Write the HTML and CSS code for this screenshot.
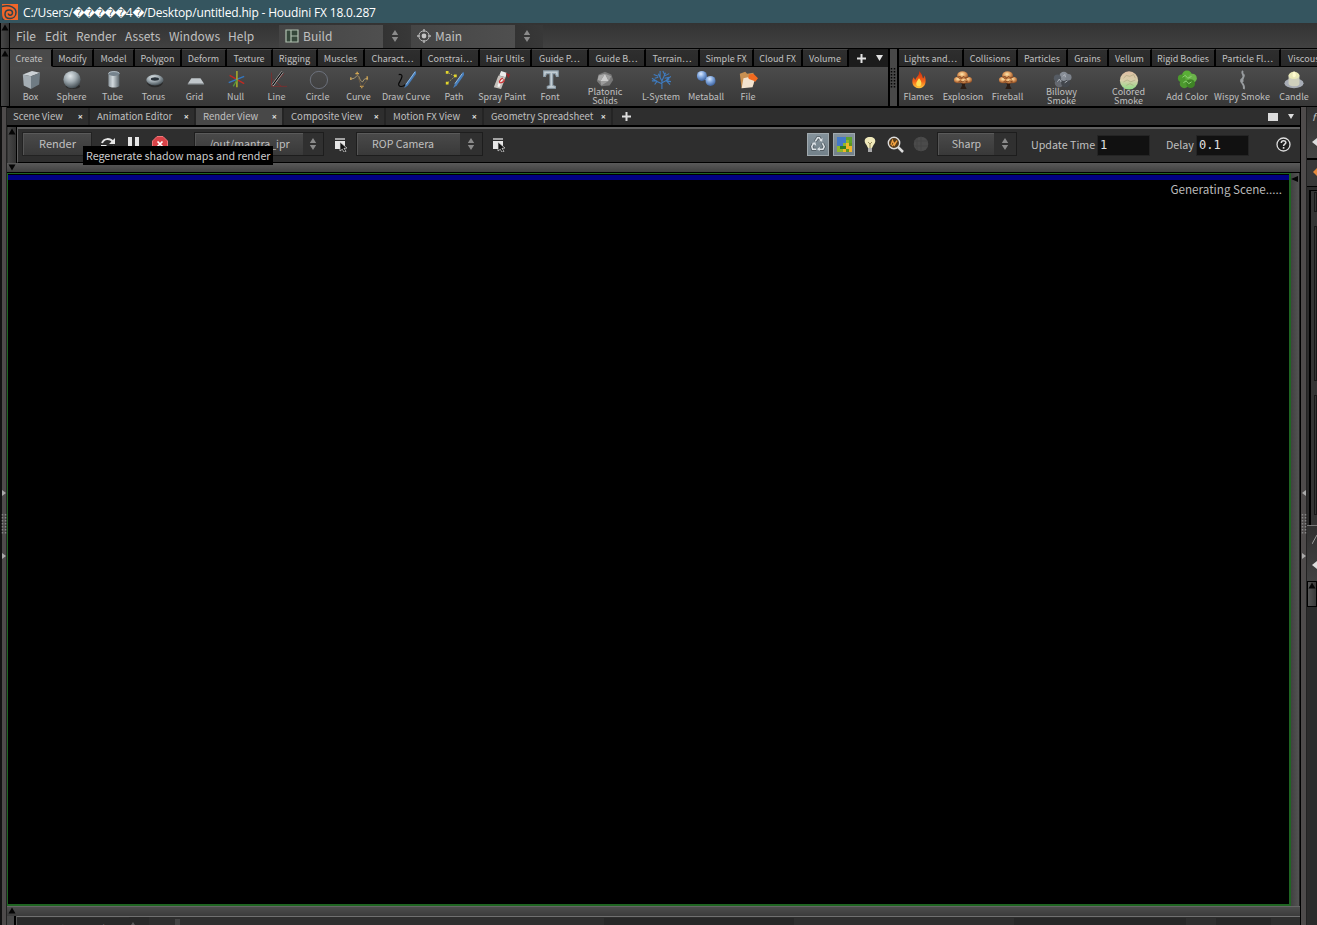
FILE: index.html
```html
<!DOCTYPE html>
<html lang="en">
<head>
<meta charset="utf-8">
<title>Houdini FX</title>
<link rel="stylesheet" href="styles.css">
</head>
<body>
<svg class="defs" width="0" height="0">
  <defs>
    <linearGradient id="steel" x1="0" x2="1"><stop offset="0" stop-color="#8e989f"/><stop offset=".4" stop-color="#d3dade"/><stop offset="1" stop-color="#5b656b"/></linearGradient>
    <radialGradient id="ball" cx=".4" cy=".3" r=".7"><stop offset="0" stop-color="#e0e7ea"/><stop offset=".5" stop-color="#9da8ae"/><stop offset="1" stop-color="#465056"/></radialGradient>
    <radialGradient id="blueball" cx=".4" cy=".3" r=".7"><stop offset="0" stop-color="#dcebff"/><stop offset=".5" stop-color="#7fa5dc"/><stop offset="1" stop-color="#3f649f"/></radialGradient>
    <linearGradient id="fire" x1="0" x2="0" y1="0" y2="1"><stop offset="0" stop-color="#c92a0c"/><stop offset=".6" stop-color="#f4661a"/><stop offset="1" stop-color="#ffc93a"/></linearGradient>
    <radialGradient id="boom" cx=".45" cy=".35" r=".65"><stop offset="0" stop-color="#ffe9b0"/><stop offset=".5" stop-color="#dd9a5c"/><stop offset="1" stop-color="#8b4b23"/></radialGradient>
    <linearGradient id="tint" x1="0" x2="0" y1="0" y2="1"><stop offset="0" stop-color="#dfc0a4"/><stop offset=".5" stop-color="#d7cfab"/><stop offset="1" stop-color="#8edb86"/></linearGradient>
    <symbol id="explosion" viewBox="0 0 22 22">
      <path d="M9 13h5l-1 4 2 4H8l2-4z" fill="#2b1d15"/>
      <ellipse cx="6" cy="11" rx="5" ry="3.500" fill="url(#boom)"/><ellipse cx="16" cy="11" rx="5" ry="3.500" fill="url(#boom)"/><ellipse cx="10.500" cy="6" rx="6" ry="4.500" fill="url(#boom)"/><ellipse cx="12" cy="12" rx="4" ry="3" fill="url(#boom)"/>
      <path d="M5 8l3-1 1 2 3-2 2 2 3-1M6 13l2-1 2 1 3-1 3 1" fill="none" stroke="#713615" stroke-width=".8"/>
    </symbol>
    <symbol id="spin" viewBox="0 0 8 14"><path d="M4 1l3.200 5H.8zM4 13l3.200-5H.8z" fill="#8b8b8b"/></symbol>
    <symbol id="pick" viewBox="0 0 14 15"><path d="M1 1h10v2H1z" fill="#a3a3a3"/><path d="M1 4h10v8H1z" fill="#e7e7e7"/><path d="M6 5l7 6-3 .4 2 3-2 .8-1.700-3L6 14z" fill="#151515" stroke="#ddd" stroke-width=".7"/></symbol>
    <symbol id="up" viewBox="0 0 8 7"><path d="M4 .5L7.500 6.500H.5z" fill="#050505"/></symbol>
    <symbol id="grip" viewBox="0 0 6 20"><path d="M1.500 0v20M4.500 0v20" stroke="currentColor" stroke-width="1.500" stroke-dasharray="1.500 1.500"/></symbol>
  </defs>
</svg>
<div class="window">
  <header class="titlebar">
    <svg class="logo" viewBox="0 0 16 16"><path d="M0 0h16v16H0z" fill="#f0662a"/><path d="M0 2.500C8 .500 14 3.500 14 8.500c0 4-3 6-6 6-3.500 0-5-2-5-4.300C3 7.500 5 6 7.300 6c2 0 3.200 1.300 3.200 2.800 0 1.600-1.200 2.500-2.500 2.400-1.200-.1-1.700-1-1.500-1.900" fill="none" stroke="#2f434c" stroke-width="1.500"/><path d="M0 9c0 4 1 6 3 7H0z" fill="#2f434c"/></svg>
    <span class="title">C:/Users/<span class="bad">�����</span>4<span class="bad">�</span>/Desktop/untitled.hip - Houdini FX 18.0.287</span>
  </header>

  <div class="row menurow">
    <div class="handle"><svg class="tri"><use href="#up"/></svg></div>
    <nav class="menu"><span class="m1">File</span><span class="m2">Edit</span><span class="m3">Render</span><span class="m4">Assets</span><span class="m5">Windows</span><span>Help</span></nav>
    <div class="desk"><svg width="14" height="14" viewBox="0 0 14 14"><path d="M1 1h12v12H1zM6 1v12M6 7h7" fill="#35473a" stroke="#b0c0b0" stroke-width="1.200"/></svg>Build</div>
    <div class="deskspin"><svg width="8" height="14"><use href="#spin"/></svg></div>
    <div class="desk"><svg width="14" height="14" viewBox="0 0 14 14"><circle cx="7" cy="7" r="5.200" fill="none" stroke="#b5b5b5"/><circle cx="7" cy="7" r="2.400" fill="#c5c5c5"/><path d="M7 0v3M7 11v3M0 7h3M11 7h3" stroke="#b5b5b5" stroke-width="1.400"/></svg>Main</div>
    <div class="deskspin"><svg width="8" height="14"><use href="#spin"/></svg></div>
  </div>

  <div class="row shelves">
    <div class="handle"><svg class="tri"><use href="#up"/></svg></div>
    <section class="shelf left">
      <div class="stabs">
        <span class="on" style="width:43px">Create</span><span style="width:41px">Modify</span><span style="width:41px">Model</span><span style="width:47px">Polygon</span><span style="width:45px">Deform</span><span style="width:46px">Texture</span><span style="width:45px">Rigging</span><span style="width:47px">Muscles</span><span style="width:57px">Charact…</span><span style="width:58px">Constrai…</span><span style="width:52px">Hair Utils</span><span style="width:57px">Guide P…</span><span style="width:57px">Guide B…</span><span style="width:54px">Terrain…</span><span style="width:54px">Simple FX</span><span style="width:49px">Cloud FX</span><span style="width:46px">Volume</span>
        <svg class="plus" width="9" height="9" viewBox="0 0 9 9"><path d="M4.500 0v9M0 4.500h9" stroke="#e2e2e2" stroke-width="2"/></svg>
        <svg class="down" width="7" height="6" viewBox="0 0 7 6"><path d="M0 0h7L3.500 6z" fill="#e2e2e2"/></svg>
      </div>
      <div class="tools">
        <div class="tool" style="width:41px"><svg viewBox="0 0 22 22"><path d="M2 5l10-4 9 2-10 4z" fill="#cbd1d5"/><path d="M2 5l9 2v14l-8-4z" fill="#a4adb3"/><path d="M11 7l10-4-1 13-9 5z" fill="#6f7b83"/></svg><b>Box</b></div>
        <div class="tool" style="width:41px"><svg viewBox="0 0 22 22"><ellipse cx="12" cy="18" rx="8" ry="3" fill="#292929"/><circle cx="11" cy="10.500" r="9.500" fill="url(#ball)"/></svg><b>Sphere</b></div>
        <div class="tool" style="width:41px"><svg viewBox="0 0 22 22"><path d="M6 4v13c0 3 12 3 12 0V4z" fill="url(#steel)"/><ellipse cx="12" cy="4" rx="6" ry="2.500" fill="#76838d"/><path d="M6 4c0-3 12-3 12 0" fill="none" stroke="#b7c2ca"/></svg><b>Tube</b></div>
        <div class="tool" style="width:41px"><svg viewBox="0 0 22 22"><ellipse cx="12" cy="13" rx="9" ry="6" fill="#292929"/><ellipse cx="12" cy="11" rx="9.500" ry="6" fill="url(#ball)"/><ellipse cx="12" cy="10" rx="4.500" ry="1.900" fill="#2a333b"/></svg><b>Torus</b></div>
        <div class="tool" style="width:41px"><svg viewBox="0 0 22 22"><path d="M7 9h10l4 6H3z" fill="#c1c7cb"/><path d="M3 15h18v1H3z" fill="#878f94"/></svg><b>Grid</b></div>
        <div class="tool" style="width:41px"><svg viewBox="0 0 22 22"><path d="M4 6l16 9" stroke="#c02a22" stroke-width="1.500"/><path d="M3 14l17-7" stroke="#3477c0" stroke-width="1.500"/><path d="M12 1v18" stroke="#a9ad2c" stroke-width="1.700"/><path d="M8 18l4-7" stroke="#53973b" stroke-width="1.500"/></svg><b>Null</b></div>
        <div class="tool" style="width:41px"><svg viewBox="0 0 22 22"><path d="M5 3v15h17M6 16L19 4M6 10l10 8" stroke="#793030" fill="none"/><path d="M6 17L17 2" stroke="#ddd" stroke-width="2.500"/><path d="M6 17L17 2" stroke="#090909" stroke-width="1.500"/></svg><b>Line</b></div>
        <div class="tool" style="width:41px"><svg viewBox="0 0 22 22"><circle cx="12" cy="11" r="9.500" fill="none" stroke="#707581"/></svg><b>Circle</b></div>
        <div class="tool" style="width:41px"><svg viewBox="0 0 22 22"><path d="M2 10l4-1 3-3c3 0 2 6 6 7l2-3 4-1" fill="none" stroke="#b4a276"/><path d="M9 2v3M7 4h4M14 18v2M12 18h4M2 8v3M20 7v4" stroke="#d1a553" stroke-width="1.500"/><path d="M9 5l5 14 7-9" fill="none" stroke="#846742" stroke-width=".6"/></svg><b>Curve</b></div>
        <div class="tool" style="width:54px"><svg viewBox="0 0 22 22"><path d="M3 5c7-1 2 6 0 10-1 4 5 4 7 1" fill="none" stroke="#070707" stroke-width="1.300"/><path d="M21 1L11 15l-2 5 4-3L23 3z" fill="#477db9"/><path d="M21 2L11 16" stroke="#9dc1e4"/></svg><b>Draw Curve</b></div>
        <div class="tool" style="width:42px"><svg viewBox="0 0 22 22"><path d="M3 2l9 5-9 8" fill="none" stroke="#ada85f" stroke-dasharray="1.500 1.200"/><path d="M2 1h3v3H2zM11 5h3v3h-3zM2 13h3v3H2z" fill="#e2d52b"/><path d="M21 2L12 15l-2 5 4-3L23 4z" fill="#477db9"/><path d="M20 4l-8 11" stroke="#9dc1e4"/></svg><b>Path</b></div>
        <div class="tool" style="width:54px"><svg viewBox="0 0 22 22"><path d="M7 6l8 2-5 13-8-2z" fill="#c7c2bd"/><path d="M8 6l2-5 6 2-1 5z" fill="#ececec"/><path d="M9 9l3 1-4 9-2-1z" fill="#f4f4f4"/><path d="M12 9c-4 1-5 6-2 5s4-2 3-4" fill="none" stroke="#ce3636" stroke-width="1.500"/><path d="M15 3l5 2-2 4z" fill="#a92226" opacity=".8"/></svg><b>Spray Paint</b></div>
        <div class="tool" style="width:42px"><svg viewBox="0 0 22 22"><path d="M4 1h16v6h-2l-1-3h-3v13l3 1v2H8v-2l3-1V4H7L6 7H4z" fill="#c3cdd3" stroke="#8fa0ac" stroke-width="1.200"/></svg><b>Font</b></div>
        <div class="tool two" style="width:68px"><svg viewBox="0 0 22 22"><path d="M11 2l7 3 2 6-4 6-9 1-5-6 2-7z" fill="#777"/><path d="M11 4L6 12h9z" fill="#ccc"/><path d="M11 4l7 3-3 5zM6 12l1 5 8-5z" fill="#9b9b9b"/><path d="M4 6l7-2-5 8-3-1z" fill="#a8a8a8"/></svg><b>Platonic<br>Solids</b></div>
        <div class="tool" style="width:44px"><svg viewBox="0 0 22 22"><path d="M12 21v-9M12 15L3 11M12 14l8-4M12 12L8 4M12 12l4-9M6 12L1 9M7 12l-3 4M8 7L3 5M10 8V1M14 7l6-3M15 5l-2-4M17 12l6 1M17 11l5-4M17 12l4 4M5 12H1M8 8L4 9M15 9l5-1" fill="none" stroke="#3f7cc0" stroke-width="1.200"/></svg><b>L-System</b></div>
        <div class="tool" style="width:46px"><svg viewBox="0 0 22 22"><path d="M6 6l10 6" stroke="#7aa1d6" stroke-width="4"/><circle cx="6.500" cy="6.500" r="5.500" fill="url(#blueball)"/><circle cx="16" cy="12" r="5.500" fill="url(#blueball)"/></svg><b>Metaball</b></div>
        <div class="tool" style="width:38px"><svg viewBox="0 0 22 22"><path d="M2 4l6-2 2 2 7-1v13L4 20z" fill="#c79052"/><path d="M12 5l5-1 5 5-3 4-5-2-3 2z" fill="#f16a20"/><path d="M4 20L6 9l5-1 1 2 6 2-2 7z" fill="#f3e3cf"/></svg><b>File</b></div>
      </div>
    </section>
    <div class="divider"><svg width="6" height="20"><use href="#grip"/></svg></div>
    <section class="shelf right">
      <div class="stabs">
        <span style="width:65px">Lights and…</span><span style="width:54px">Collisions</span><span style="width:50px">Particles</span><span style="width:41px">Grains</span><span style="width:43px">Vellum</span><span style="width:64px">Rigid Bodies</span><span style="width:65px">Particle Fl…</span><span class="cut">Viscous</span>
      </div>
      <div class="tools">
        <div class="tool" style="width:39px"><svg viewBox="0 0 22 22"><path d="M11 1c5 5 3 7 5 8l1-3c3 6 1 14-6 14S2 13 5 8l2 3c1-4 5-5 4-10z" fill="url(#fire)"/><path d="M11 9c4 4 3 9 0 9s-4-3-2-6z" fill="#ffdf54"/></svg><b>Flames</b></div>
        <div class="tool" style="width:50px"><svg><use href="#explosion"/></svg><b>Explosion</b></div>
        <div class="tool" style="width:39px"><svg><use href="#explosion"/></svg><b>Fireball</b></div>
        <div class="tool two" style="width:69px"><svg viewBox="0 0 22 22"><circle cx="8" cy="14" r="5" fill="#656970"/><circle cx="15" cy="14" r="5" fill="#42464c"/><circle cx="13" cy="7" r="5" fill="#878d96"/><circle cx="6" cy="9" r="4" fill="#555b63"/><circle cx="18" cy="8" r="3.500" fill="#7c828b"/><path d="M6 13l2-3 2 3M12 7l2-2 1 3M14 14l3-2" stroke="#b5bbc2" fill="none"/></svg><b>Billowy<br>Smoke</b></div>
        <div class="tool two" style="width:65px"><svg viewBox="0 0 22 22"><circle cx="11" cy="11.500" r="10" fill="url(#tint)"/><path d="M5 9l3-3 4 1 4-2 2 4M5 13l4-2 4 2 5-2M8 17l4-2 4 2" stroke="#a09f78" stroke-width=".6" fill="none"/></svg><b>Colored<br>Smoke</b></div>
        <div class="tool" style="width:52px"><svg viewBox="0 0 22 22"><circle cx="11" cy="6" r="5.500" fill="#5aae37"/><circle cx="5" cy="9" r="4" fill="#4b992d"/><circle cx="17" cy="9" r="4.800" fill="#6ab34a"/><circle cx="8" cy="15" r="5" fill="#4d992f"/><circle cx="15" cy="15" r="4.800" fill="#3f8426"/><path d="M6 8l3-2 3 3 4-2M7 14l3-2 3 3 3-2" stroke="#94d779" fill="none"/></svg><b>Add Color</b></div>
        <div class="tool" style="width:58px"><svg viewBox="0 0 22 22"><path d="M12 1c-3 3 4 5-1 9-4 3 4 5 2 11M13 5c1 3-3 4-1 8" fill="none" stroke="#999da0" stroke-width="2"/></svg><b>Wispy Smoke</b></div>
        <div class="tool" style="width:46px"><svg viewBox="0 0 22 22"><ellipse cx="11" cy="14.500" rx="10.500" ry="5.500" fill="#a8adb6"/><path d="M5 6v9c1 4 12 4 12 0V6z" fill="#cfd0bd"/><ellipse cx="11" cy="6" rx="6" ry="4" fill="#eae9b8"/><path d="M11 1c4 5 1 7 0 7s-3-2 0-7z" fill="#fffbd0"/></svg><b>Candle</b></div>
      </div>
    </section>
  </div>

  <div class="workspace">
    <div class="edge"><svg class="e1" width="4" height="6" viewBox="0 0 4 6"><path d="M0 0l4 3-4 3z" fill="#aaa"/></svg><svg class="e2" width="6" height="20"><use href="#grip"/></svg><svg class="e3" width="4" height="6" viewBox="0 0 4 6"><path d="M0 0l4 3-4 3z" fill="#aaa"/></svg></div>
    <main class="pane">
      <div class="ptabs">
        <div class="ptab" style="width:83px"><span>Scene View</span><i>×</i></div><div class="ptab" style="width:106px"><span>Animation Editor</span><i>×</i></div><div class="ptab on" style="width:88px"><span>Render View</span><i>×</i></div><div class="ptab" style="width:102px"><span>Composite View</span><i>×</i></div><div class="ptab" style="width:98px"><span>Motion FX View</span><i>×</i></div><div class="ptab" style="width:129px"><span>Geometry Spreadsheet</span><i>×</i></div>
        <svg class="padd" width="9" height="9" viewBox="0 0 9 9"><path d="M4.500 0v9M0 4.500h9" stroke="#ddd" stroke-width="2"/></svg>
        <svg class="pmax" width="10" height="8" viewBox="0 0 10 8"><path d="M0 0h10v8H0z" fill="#dcdcdc"/></svg>
        <svg class="pdown" width="6" height="5" viewBox="0 0 6 5"><path d="M0 0h6L3 5z" fill="#ddd"/></svg>
      </div>
      <div class="toolrow">
        <div class="handle small"><svg class="tri"><use href="#up"/></svg></div>
        <div class="toolbar">
          <div class="btn render">Render</div>
          <svg class="ic reload" width="16" height="15" viewBox="0 0 16 15"><path d="M2 6c2-5 8-5 11-1" fill="none" stroke="#e6e6e6" stroke-width="2"/><path d="M15 1v6H9z" fill="#e6e6e6"/><path d="M14 9c-2 5-8 5-11 1" fill="none" stroke="#e6e6e6" stroke-width="2"/><path d="M1 14V8h6z" fill="#e6e6e6"/></svg>
          <svg class="ic pause" width="11" height="14" viewBox="0 0 11 14"><path d="M0 0h4v14H0zM7 0h4v14H7z" fill="#e6e6e6"/></svg>
          <svg class="ic stop" width="16" height="16" viewBox="0 0 16 16"><path d="M5 .500h6L15.500 5v6L11 15.500H5L.5 11V5z" fill="#d94348" stroke="#ef7779"/><path d="M5.500 5.500l5 5M10.500 5.500l-5 5" stroke="#fff" stroke-width="1.700"/></svg>
          <div class="combo c1"><div class="btn">/out/mantra_ipr</div><div class="spin"><svg width="8" height="14"><use href="#spin"/></svg></div></div>
          <svg class="ic pick1" width="14" height="15"><use href="#pick"/></svg>
          <div class="combo c2"><div class="btn">ROP Camera</div><div class="spin"><svg width="8" height="14"><use href="#spin"/></svg></div></div>
          <svg class="ic pick2" width="14" height="15"><use href="#pick"/></svg>
          <div class="toggle t1"><svg width="16" height="16" viewBox="0 0 18 18"><path d="M6 6l2.500-4h2L13 6M14 8l2 4-1.500 3H10M7 15H3l-1-3 2-4" fill="none" stroke="#555f66" stroke-width="3.600"/><path d="M6 6l2.500-4h2L13 6M14 8l2 4-1.500 3H10M7 15H3l-1-3 2-4" fill="none" stroke="#dce2e6" stroke-width="1.700"/><path d="M10 6h4V2zM11 12v5l-3-2zM2 8l4-1 1 4z" fill="#dce2e6"/></svg></div>
          <div class="toggle t2"><svg width="15" height="15" viewBox="0 0 15 15"><path d="M0 0h15v15H0z" fill="#4479c8"/><path d="M9 0h6v6H9z" fill="#60a32c"/><path d="M9 3h3v3H9zM6 6h3v3H6zM0 9h6v6H0z" fill="#8eb62c"/><path d="M3 9h3v3H3zM9 6h6v3H9zM6 9h3v6H6z" fill="#327b22"/><path d="M9 6h3v6H9zM12 9h3v6h-3zM6 12h3v3H6z" fill="#efb62b"/><path d="M9 12h3v3H9zM12 6h3v3h-3z" fill="#5f961f"/></svg></div>
          <svg class="ic bulb" width="12" height="17" viewBox="0 0 12 17"><path d="M6 1C0 1-.500 6 2.500 9L4 12h4l1.500-3C12.500 6 12 1 6 1z" fill="#f0e9bb"/><path d="M4 12h4v4H4z" fill="#aaa"/><path d="M4 6l2 2 2-2M6 8v4" stroke="#9a8d5c" fill="none"/></svg>
          <svg class="ic mag" width="17" height="17" viewBox="0 0 17 17"><path d="M11 11l5 5" stroke="#ddd" stroke-width="2.500"/><circle cx="7" cy="7" r="5.700" fill="#573d1d" stroke="#ddd" stroke-width="1.400"/><path d="M4 9l1.500-4.500 2 4.500L10 4.500M5 10l5-5" stroke="#f0a141" stroke-width="1.300" fill="none"/></svg>
          <svg class="ic orb" width="16" height="16" viewBox="0 0 16 16"><circle cx="8" cy="8" r="7.300" fill="#4b4b4b"/><path d="M8 1v14M4 2v12M1 5h13M1 10h14" stroke="#444" fill="none"/></svg>
          <div class="combo c3"><div class="btn">Sharp</div><div class="spin"><svg width="8" height="14"><use href="#spin"/></svg></div></div>
          <label class="lab l1">Update Time</label><div class="field">1</div>
          <label class="lab l2">Delay</label><div class="field">0.1</div>
          <svg class="ic help" width="15" height="15" viewBox="0 0 15 15"><circle cx="7.500" cy="7.500" r="6.500" fill="#202020" stroke="#ddd" stroke-width="1.300"/><path d="M5.300 6c0-3 4.500-2.800 4.500-.4 0 1.600-2.200 1.500-2.200 3.300M7.600 10v1.700" fill="none" stroke="#ddd" stroke-width="1.600"/></svg>
          <div class="tip">Regenerate shadow maps and render</div>
        </div>
      </div>
      <div class="splitter"><svg class="flip" width="8" height="7"><use href="#up"/></svg></div>
      <div class="viewrow">
        <div class="viewport"><div class="progress"></div><div class="status">Generating Scene.....</div></div>
        <div class="side"><svg width="7" height="6" viewBox="0 0 7 6"><path d="M7 0v6L0 3z" fill="#050505"/></svg></div>
      </div>
      <div class="splitter low"><svg width="8" height="7"><use href="#up"/></svg></div>
      <div class="footer"><div class="fh"></div><div class="fbar"><div class="fseg a">Active Render</div><div class="fspin"><svg width="8" height="14"><use href="#spin"/></svg></div><div class="knob"></div><div class="fseg b"></div><div class="fseg c"></div><div class="fseg d"></div></div></div>
    </main>
    <div class="edge redge"><svg class="e1" width="4" height="6" viewBox="0 0 4 6"><path d="M4 0L0 3l4 3z" fill="#aaa"/></svg><svg class="e2" width="6" height="20"><use href="#grip"/></svg><svg class="e3" width="4" height="6" viewBox="0 0 4 6"><path d="M0 0l4 3-4 3z" fill="#aaa"/></svg></div>
    <aside class="next">
      <div class="n1"><em>f</em><svg width="5" height="8" viewBox="0 0 5 8"><path d="M5 0v8L0 4z" fill="#ddd"/></svg></div>
      <div class="n2"><svg width="4" height="8" viewBox="0 0 4 8"><path d="M4 0v8L0 4z" fill="#e4883b"/></svg></div>
      <div class="n3"><div></div><div></div><div></div></div>
      <div class="n4"><svg width="5" height="9" viewBox="0 0 5 9"><path d="M0 9l5-9" stroke="#999"/></svg><svg width="5" height="8" viewBox="0 0 5 8"><path d="M5 0v8L0 4z" fill="#ddd"/></svg></div>
      <div class="n5"><svg width="8" height="7"><use href="#up"/></svg></div>
    </aside>
  </div>
</div>
</body>
</html>
```
FILE: styles.css
```css
* { box-sizing: border-box; }
body { margin: 0; background: #000; overflow: hidden; font-family: "Noto Sans CJK SC", "Noto Sans", sans-serif; color: #c0c0c0; }
svg { display: block; flex: none; }
.defs { position: absolute; }
.window { width: 1317px; height: 925px; display: flex; flex-direction: column; overflow: hidden; white-space: nowrap; }
.titlebar { height: 23px; flex: none; display: flex; align-items: center; background: #35555f; color: #fff; padding-left: 2px; }
.logo { width: 16px; height: 16px; margin-right: 5px; }
.title { font: 12px/20px "Open Sans", sans-serif; letter-spacing: -.18px; padding-top: 2px; }
.bad { font-family: "DejaVu Sans", sans-serif; font-size: 11.500px; letter-spacing: -1.200px; }
.row { display: flex; flex: none; }
.handle { width: 10px; flex: none; border-left: 1px solid #000; border-right: 1px solid #000; background: linear-gradient(90deg, #474747, #333); }
.tri { width: 8px; height: 7px; margin: 1px 0 0 0; }

.menurow { height: 25px; background: linear-gradient(#333, #414141); }
.menu { width: 269px; padding-left: 6px; display: flex; font-size: 12px; line-height: 25px; }
.m1 { width: 29px; } .m2 { width: 31px; } .m3 { width: 49px; } .m4 { width: 44px; } .m5 { width: 59px; }
.desk { width: 104px; height: 23px; margin-top: 2px; padding: 0 0 2px 6px; display: flex; align-items: center; gap: 4px; font-size: 12px; background: linear-gradient(90deg, #454545, #4f4f4f); }
.deskspin { width: 28px; height: 23px; margin-top: 2px; display: flex; align-items: center; padding: 0 0 2px 8px; background: linear-gradient(90deg, #333, #383838); }

.shelves { height: 59px; border-top: 1px solid #000; border-bottom: 1px solid #000; background: #2b2b2b; }
.shelf { display: flex; flex-direction: column; }
.shelf.left { width: 878px; flex: none; }
.shelf.right { flex: 1; overflow: hidden; }
.stabs { height: 18px; display: flex; align-items: center; font-size: 9px; background: #1c1c1c; flex: none; }
.stabs span { height: 18px; line-height: 18px; text-align: center; flex: none; border-right: 2px solid #000; border-top: 1px solid #444; border-bottom: 1px solid #000; background: linear-gradient(#2e2e2e, #292929); }
.stabs .on { background: #4a4a4a; border-bottom-color: #4a4a4a; padding-right: 3px; }
.stabs .cut { width: 60px; text-align: left; padding-left: 7px; }
.plus { margin-left: 8px; } .down { margin-left: 10px; }
.tools { height: 39px; display: flex; background: linear-gradient(#4b4b4b, #383838); }
.tool { display: flex; flex: none; flex-direction: column; align-items: center; padding-top: 3px; }
.tool svg { width: 20px; height: 20px; }
.tool b { font-weight: 400; font-size: 9px; line-height: 12px; text-align: center; margin-top: 1px; }
.tool.two b { line-height: 9px; margin-top: -3px; }
.divider { width: 11px; flex: none; border: solid #000; border-width: 0 2px; background: #484848; color: #050505; display: flex; align-items: center; }

.workspace { flex: 1; min-height: 0; display: flex; background: #000; }
.edge { width: 7px; flex: none; border-left: 2px solid #111; border-right: 1px solid #222; background: #4e4b4b; color: #858585; }
.edge .e1 { margin-top: 383px; } .edge .e2 { margin: 18px 0 0 -1px; } .edge .e3 { margin-top: 19px; }
.pane { width: 1293px; flex: none; display: flex; flex-direction: column; }
.ptabs { height: 20px; flex: none; border-top: 1px solid #000; border-bottom: 2px solid #000; background: #2e2e2e; display: flex; align-items: center; font-size: 9.550px; }
.ptab { height: 17px; flex: none; padding: 0 5px 1px 6px; display: flex; justify-content: space-between; align-items: center; border-right: 2px solid #242424; }
.ptab + .ptab { padding-left: 7px; }
.ptab.on { background: #484848; }
.ptab i { font: 700 9px/14px "Noto Sans", sans-serif; padding-top: 2px; color: #ddd; }
.padd { margin-left: 9px; } .pmax { margin-left: 637px; } .pdown { margin-left: 10px; }
.toolrow { height: 36px; flex: none; display: flex; }
.handle.small { width: 10px; border-left: 1px solid #333; border-right-width: 1px; }
.handle.small .tri { width: 8px; height: 7px; margin-top: 1px; }
.toolbar { flex: 1; position: relative; border-top: 2px solid #606060; border-left: 1px solid #606060; border-bottom: 1px solid #000; background: #2e2e2e; display: flex; align-items: center; padding: 0 0 3px 5px; }
.btn { height: 22px; line-height: 20px; background: linear-gradient(#494949, #393939); border-top: 1px solid #5a5a5a; border-left: 1px solid #555; text-align: center; flex: none; }
.btn.render { width: 68px; box-shadow: 0 0 0 1px #222; font-size: 11px; line-height: 18px; }
.combo { display: flex; flex: none; box-shadow: 0 0 0 1px #1d1d1d; }
.combo .btn { font-size: 10.600px; line-height: 19px; }
.spin { width: 22px; height: 22px; display: flex; align-items: center; justify-content: center; background: #303030; padding-bottom: 1px; }
.reload { margin-left: 9px; } .pause { margin-left: 12px; } .stop { margin-left: 13px; }
.c1 { margin-left: 27px; } .c1 .btn { width: 108px; } .c1 .spin { width: 20px; }
.pick1 { margin-left: 11px; } .pick2 { margin-left: 10px; }
.c2 { margin-left: 9px; } .c2 .btn { width: 103px; padding-right: 12px; }
.toggle { width: 22px; height: 23px; flex: none; display: flex; align-items: center; justify-content: center; background: linear-gradient(#84929b, #73818a); border: 1px solid #a0a9ae; }
.t1 { margin-left: 301px; } .t2 { margin-left: 4px; }
.bulb { margin-left: 9px; } .mag { margin-left: 11px; } .orb { margin-left: 9px; }
.c3 { margin-left: 9px; } .c3 .btn { width: 56px; }
.lab { font-size: 10.700px; flex: none; } .l1 { width: 66px; margin-left: 15px; } .l2 { width: 30px; margin-left: 16px; }
.field { width: 53px; height: 21px; flex: none; padding-left: 2px; font: 12px/19px "DejaVu Sans Mono", monospace; background: #111; border: 1px solid #242424; color: #e0e0e0; margin-top: 2px; }
.help { margin-left: 27px; }
.tip { position: absolute; left: 65px; top: 17px; width: 190px; height: 19px; background: #000; font-size: 10.680px; line-height: 19px; padding-left: 3px; color: #ccc; z-index: 2; }
.splitter { height: 10px; flex: none; background: linear-gradient(#5a5a5a, #404040); border-bottom: 1px solid #000; }
.flip { transform: rotate(180deg); margin: 1px 0 0 1px; }
.viewrow { flex: 1; min-height: 0; display: flex; }
.viewport { width: 1284px; border: solid #1f6522; border-width: 1px 2px 2px 1px; background: #000; }
.progress { height: 5px; margin-top: 1px; background: #000083; }
.status { font-size: 11.680px; line-height: 18px; text-align: right; padding: 0 7px 0 0; color: #bababa; }
.side { width: 9px; background: linear-gradient(90deg, #414141, #535353); border-right: 1px solid #222; padding-top: 3px; }
.splitter.low { height: 10px; border: 0; border-top: 1px solid #666; background: linear-gradient(#4d4d4d, #3b3b3b); }
.low svg { margin-left: 1px; }
.footer { height: 9px; flex: none; display: flex; overflow: hidden; }
.fh { width: 9px; background: #484848; border-right: 2px solid #000; }
.fbar { flex: 1; display: flex; border-top: 1px solid #707070; border-left: 1px solid #555; background: #2e2e2e; height: 24px; }
.fseg { height: 22px; margin-top: 1px; background: #272727; font-size: 11px; }
.fseg.a { width: 112px; padding: 3px 0 0 28px; line-height: 14px; color: #888; background: #292929; }
.fspin { width: 20px; padding-top: 4px; background: #252525; opacity: .5; }
.knob { width: 5px; height: 20px; margin: 2px 0 0 26px; background: #444; }
.b { width: 190px; margin-left: 424px; } .c { width: 172px; margin-left: 220px; } .d { width: 55px; margin-left: 30px; }
.redge { border-left: 1px solid #000; }
.redge .e2 { margin-left: 0; }
.redge .e1, .redge .e3 { margin-left: 1px; }
.next { flex: 1; background: #2b2b2b; overflow: hidden; display: flex; flex-direction: column; }
.n1 { height: 53px; padding: 2px 0 0 5px; background: linear-gradient(#333, #454545); border-bottom: 2px solid #000; font-size: 10px; }
.n1 em { display: block; height: 29px; line-height: 16px; }
.n2 { height: 27px; padding: 8px 0 0 6px; background: #383838; border-bottom: 1px solid #000; }
.n3 { height: 335px; margin: 3px 0 0 2px; border-left: 2px solid #000; border-top: 1px solid #000; background: #353535; display: flex; flex-direction: column; gap: 14px; padding-left: 3px; }
.n3 div { border: 1px solid #181818; height: 155px; } .n3 div:first-child { height: 20px; margin-top: 1px; } .n3 div:last-child { height: 120px; }
.n4 { height: 56px; border-top: 1px solid #777; background: linear-gradient(#303030, #424242); padding: 9px 0 0 5px; display: flex; flex-direction: column; gap: 17px; }
.n5 { height: 26px; border: 1px solid #000; background: linear-gradient(90deg, #555, #393939); }
```
